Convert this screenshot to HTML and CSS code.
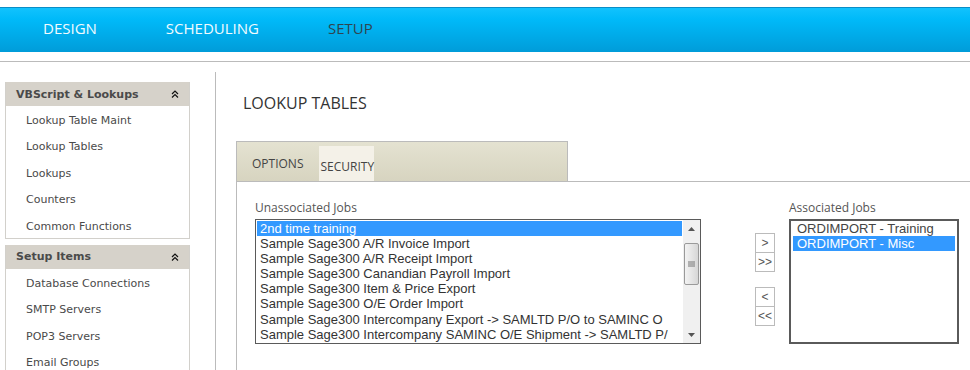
FILE: index.html
```html
<!DOCTYPE html>
<html lang="en">
<head>
  <meta charset="UTF-8" />
  <title>Lookup Tables</title>
  <link rel="stylesheet" href="styles.css">
</head>
<body>

  <div class="topbar">
    <a class="nav-item">DESIGN</a>
    <a class="nav-item">SCHEDULING</a>
    <a class="nav-item active">SETUP</a>
  </div>
  <div class="rule"></div>

  <div class="main">
    <div class="sidebar">
      <div class="side-box">
        <div class="side-head">
          <span>VBScript &amp; Lookups</span>
          <svg class="chev" width="8" height="8" viewBox="0 0 8 8"><path d="M1 4 L4 1 L7 4 M1 7.5 L4 4.5 L7 7.5" fill="none" stroke="#111" stroke-width="1.2"/></svg>
        </div>
        <div class="side-item">Lookup Table Maint</div>
        <div class="side-item">Lookup Tables</div>
        <div class="side-item">Lookups</div>
        <div class="side-item">Counters</div>
        <div class="side-item">Common Functions</div>
      </div>
      <div class="side-box">
        <div class="side-head">
          <span>Setup Items</span>
          <svg class="chev" width="8" height="8" viewBox="0 0 8 8"><path d="M1 4 L4 1 L7 4 M1 7.5 L4 4.5 L7 7.5" fill="none" stroke="#111" stroke-width="1.2"/></svg>
        </div>
        <div class="side-item">Database Connections</div>
        <div class="side-item">SMTP Servers</div>
        <div class="side-item">POP3 Servers</div>
        <div class="side-item">Email Groups</div>
      </div>
    </div>

    <div class="content">
      <h1 class="page-title">LOOKUP TABLES</h1>

      <div class="tabs">
        <span class="tab">OPTIONS</span>
        <span class="tab selected">SECURITY</span>
      </div>

      <div class="panel">
        <div class="col">
          <div class="label">Unassociated Jobs</div>
          <div class="listbox">
            <div class="options">
              <div class="opt selected">2nd time training</div>
              <div class="opt">Sample Sage300 A/R Invoice Import</div>
              <div class="opt">Sample Sage300 A/R Receipt Import</div>
              <div class="opt">Sample Sage300 Canandian Payroll Import</div>
              <div class="opt">Sample Sage300 Item &amp; Price Export</div>
              <div class="opt">Sample Sage300 O/E Order Import</div>
              <div class="opt">Sample Sage300 Intercompany Export -&gt; SAMLTD P/O to SAMINC O</div>
              <div class="opt">Sample Sage300 Intercompany SAMINC O/E Shipment -&gt; SAMLTD P/</div>
            </div>
            <div class="scrollbar">
              <div class="arrow">
                <svg width="7" height="4" viewBox="0 0 7 4"><path d="M0 4 L3.5 0 L7 4 Z" fill="#555"/></svg>
              </div>
              <div class="thumb">
                <svg width="7" height="7" viewBox="0 0 7 7"><path d="M0 1 H7 M0 3 H7 M0 5 H7" stroke="#777" stroke-width="1"/></svg>
              </div>
              <div class="track"></div>
              <div class="arrow">
                <svg width="7" height="4" viewBox="0 0 7 4"><path d="M0 0 L3.5 4 L7 0 Z" fill="#555"/></svg>
              </div>
            </div>
          </div>
        </div>

        <div class="movers">
          <div class="mv-group">
            <button class="mv">&gt;</button>
            <button class="mv">&gt;&gt;</button>
          </div>
          <div class="mv-group">
            <button class="mv">&lt;</button>
            <button class="mv">&lt;&lt;</button>
          </div>
        </div>

        <div class="col">
          <div class="label">Associated Jobs</div>
          <div class="listbox assoc">
            <div class="options">
              <div class="opt">ORDIMPORT - Training</div>
              <div class="opt selected">ORDIMPORT - Misc</div>
            </div>
          </div>
        </div>
      </div>
    </div>
  </div>

</body>
</html>
```

FILE: styles.css
```css
* { margin: 0; padding: 0; box-sizing: border-box; }
body {
  font-family: 'Open Sans', sans-serif;
  background: #fff;
  overflow: hidden;
}

.topbar {
  margin-top: 7px;
  height: 45px;
  border-top: 1px solid #0a8ec6;
  background: linear-gradient(#12c2fd, #00baf9 25%, #009cd9);
  display: flex;
  align-items: center;
  padding-left: 43px;
  gap: 69px;
}
.nav-item {
  color: #f2fbff;
  font-size: 15px;
  padding-bottom: 5px;
}
.nav-item.active { color: #2f4550; }

.rule {
  margin-top: 9px;
  border-top: 1px solid #bbb;
}

.main {
  display: flex;
  padding-top: 10px;
}

.sidebar {
  width: 215px;
  flex: none;
  padding: 10px 0 0 5px;
  font-family: 'DejaVu Sans', sans-serif;
  font-size: 11px;
}
.side-box {
  width: 185px;
  border: 1px solid #d2d0cb;
  border-top: none;
  margin-bottom: 6px;
}
.side-head {
  height: 24px;
  background: #d6d2ca;
  display: flex;
  align-items: center;
  justify-content: space-between;
  padding: 0 10px 0 10px;
  color: #4a4a4a;
  font-weight: bold;
}
.side-item {
  height: 26.4px;
  padding-top: 4px;
  line-height: 22.4px;
  padding-left: 20px;
  color: #4a4a4a;
}

.content {
  flex: 1;
  border-left: 1px solid #bbb;
  padding-left: 20px;
  min-height: 300px;
}
.page-title {
  font-size: 16px;
  font-weight: normal;
  color: #333;
  padding: 20px 0 0 7px;
  height: 69px;
}

.tabs {
  width: 332px;
  height: 40px;
  border: 1px solid #bbb;
  border-bottom: none;
  background: linear-gradient(#e4e2d1, #d7d4c0);
  display: flex;
  align-items: flex-end;
  padding-left: 15px;
}
.tab {
  font-size: 12px;
  color: #444;
  height: 35px;
  line-height: 35px;
  margin-right: 16px;
}
.tab.selected {
  background: #f4f1e8;
  margin-right: 0;
  padding: 4px 1px 0 1px;
  line-height: 33px;
  width: 55px;
}

.panel {
  border-top: 1px solid #bbb;
  border-left: 1px solid #bbb;
  padding: 17px 0 0 18px;
  display: flex;
  min-height: 200px;
}
.label {
  font-size: 12px;
  color: #555;
  height: 20px;
}

.listbox {
  width: 446px;
  height: 125px;
  border: 1px solid #5a5a5a;
  display: flex;
  font-family: 'Liberation Sans', Arial, sans-serif;
  font-size: 13px;
  color: #333;
}
.options {
  flex: 1;
  padding: 1px 1px 0 1px;
  overflow: hidden;
}
.opt {
  height: 15.1px;
  line-height: 15px;
  padding-left: 3px;
  white-space: nowrap;
  overflow: hidden;
}
.opt.selected {
  background: #3399ff;
  color: #fff;
}

.scrollbar {
  width: 17px;
  flex: none;
  background: #f0f0f0;
  display: flex;
  flex-direction: column;
}
.arrow {
  height: 17px;
  display: flex;
  align-items: center;
  justify-content: center;
}
.thumb {
  height: 42px;
  margin: 6px 1px 0 1px;
  border: 1px solid #9a9a9a;
  border-radius: 2px;
  background: linear-gradient(90deg, #f3f3f3, #e2e2e2 60%, #d6d6d6);
  display: flex;
  align-items: center;
  justify-content: center;
}
.track { flex: 1; }

.movers {
  width: 88px;
  padding: 34px 0 0 54px;
  display: flex;
  flex-direction: column;
  gap: 15px;
}
.mv-group { display: flex; flex-direction: column; }
.mv {
  width: 20px;
  height: 20px;
  margin-top: -1px;
  border: 1px solid #bbb;
  background: #fff;
  color: #555;
  font-family: 'Liberation Sans', sans-serif;
  font-size: 12px;
  line-height: 17px;
}
.mv-group .mv:first-child { margin-top: 0; }

.listbox.assoc {
  width: 170px;
  border: 2px solid #5a5a5a;
  color: #444;
}
.assoc .options { padding: 0 2px; }
.assoc .opt { padding-left: 4px; }
```
